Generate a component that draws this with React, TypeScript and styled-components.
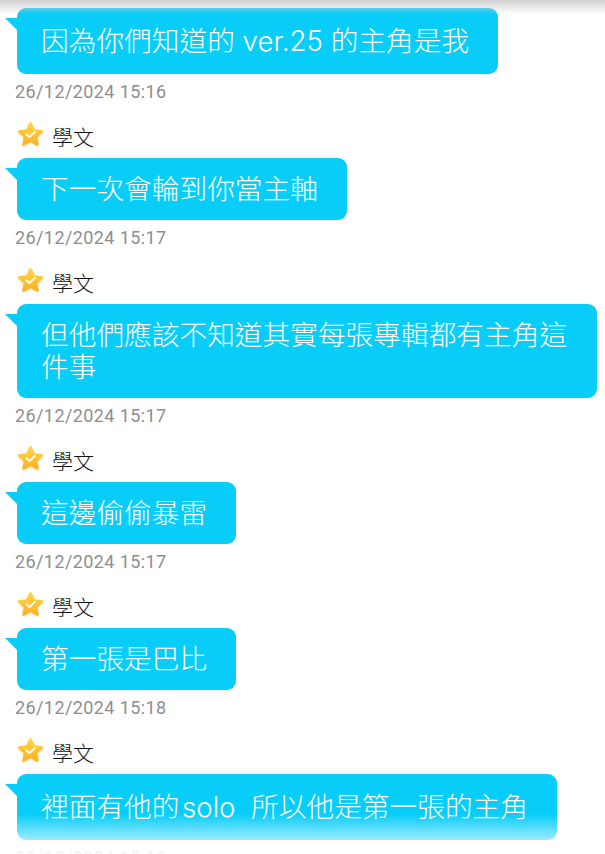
import React from 'react';
import styled, { createGlobalStyle } from 'styled-components';

const Global = createGlobalStyle`
html, body {
  margin: 0;
  padding: 0;
  background: #fff;
}
`

const Screen = styled.div`
position: relative;
width: 605px;
height: 854px;
overflow: hidden;
background: #fff;
font-family: Roboto, "Noto Sans CJK TC", sans-serif;
`
const List = styled.div`
display: flex;
flex-direction: column;
gap: 15px;
padding: 8px 8px 0 0;
`
const Entry = styled.div`
display: flex;
flex-direction: column;
align-items: flex-start;
`
const Sender = styled.div`
display: flex;
align-items: center;
gap: 8px;
height: 36px;
margin: 0 0 4px 17px;
font-size: 21px;
font-weight: 300;
color: #111;
`
const StarIcon = styled.svg`
margin-top: -3px;
filter: drop-shadow(0 1px 1px rgba(200, 160, 60, 0.3));
`
const Bubble = styled.div<{ $tall?: boolean }>`
position: relative;
box-sizing: border-box;
margin-left: 17px;
max-width: 580px;
padding: ${p => (p.$tall ? '17px' : '15px')} 29px ${p => (p.$tall ? '17px' : '15px')} 24px;
border-radius: 9px;
background: #08cdf9;
color: #fff;
font-family: Inter, "Noto Sans CJK TC", sans-serif;
font-size: 27.7px;
font-weight: 300;
line-height: 32px;
white-space: pre-wrap;
&::before {
  content: '';
  position: absolute;
  left: -12px;
  top: 10px;
  border-top: 12px solid #08cdf9;
  border-left: 12px solid transparent;
}
`
const Stamp = styled.div`
margin: 7px 0 0 15px;
height: 22px;
font-size: 18px;
line-height: 22px;
letter-spacing: 0.4px;
color: #8e8e8e;
`
const TopShade = styled.div`
position: absolute;
left: 0;
right: 0;
top: 0;
height: 14px;
background: linear-gradient(to bottom, #cfcfcf, rgba(255, 255, 255, 0));
`
const BottomFade = styled.div`
position: absolute;
left: 0;
right: 0;
bottom: 0;
height: 40px;
background: linear-gradient(to bottom, rgba(255, 255, 255, 0), rgba(255, 255, 255, 0.92));
`

function Star() {
  return (
    <StarIcon width="27" height="27" viewBox="0 0 26 26">
      <defs>
        <linearGradient id="star" x1="0" y1="0" x2="0" y2="1">
          <stop offset="0" stopColor="#ffd544" />
          <stop offset="1" stopColor="#fdb024" />
        </linearGradient>
      </defs>
      <path
        d="M13 2 L16.5 8.9 L24.2 10 L18.6 15.4 L19.9 22.9 L13 19.4 L6.1 22.9 L7.4 15.4 L1.8 10 L9.5 8.9 Z"
        fill="url(#star)"
        stroke="url(#star)"
        strokeWidth="2"
        strokeLinejoin="round"
      />
      <path d="M9 12.8 L12 15.4 L17.2 10.6" fill="none" stroke="#fff" strokeWidth="1.8" strokeLinecap="round" strokeLinejoin="round" />
    </StarIcon>
  );
}

const messages = [
  { text: '因為你們知道的 ver.25 的主角是我', time: '26/12/2024 15:16', first: true, tall: true },
  { text: '下一次會輪到你當主軸', time: '26/12/2024 15:17' },
  { text: '但他們應該不知道其實每張專輯都有主角這件事', time: '26/12/2024 15:17' },
  { text: '這邊偷偷暴雷', time: '26/12/2024 15:17' },
  { text: '第一張是巴比', time: '26/12/2024 15:18' },
  { text: '裡面有他的\u200Asolo  所以他是第一張的主角', time: '26/12/2024 15:19', tall: true },
];

export default function App() {
  return (
    <Screen>
      <Global />
      <List>
        {messages.map((m, i) => (
          <Entry key={i}>
            {!m.first && (
              <Sender>
                <Star />
                學文
              </Sender>
            )}
            <Bubble $tall={m.tall}>{m.text}</Bubble>
            <Stamp>{m.time}</Stamp>
          </Entry>
        ))}
      </List>
      <TopShade />
      <BottomFade />
    </Screen>
  );
}
